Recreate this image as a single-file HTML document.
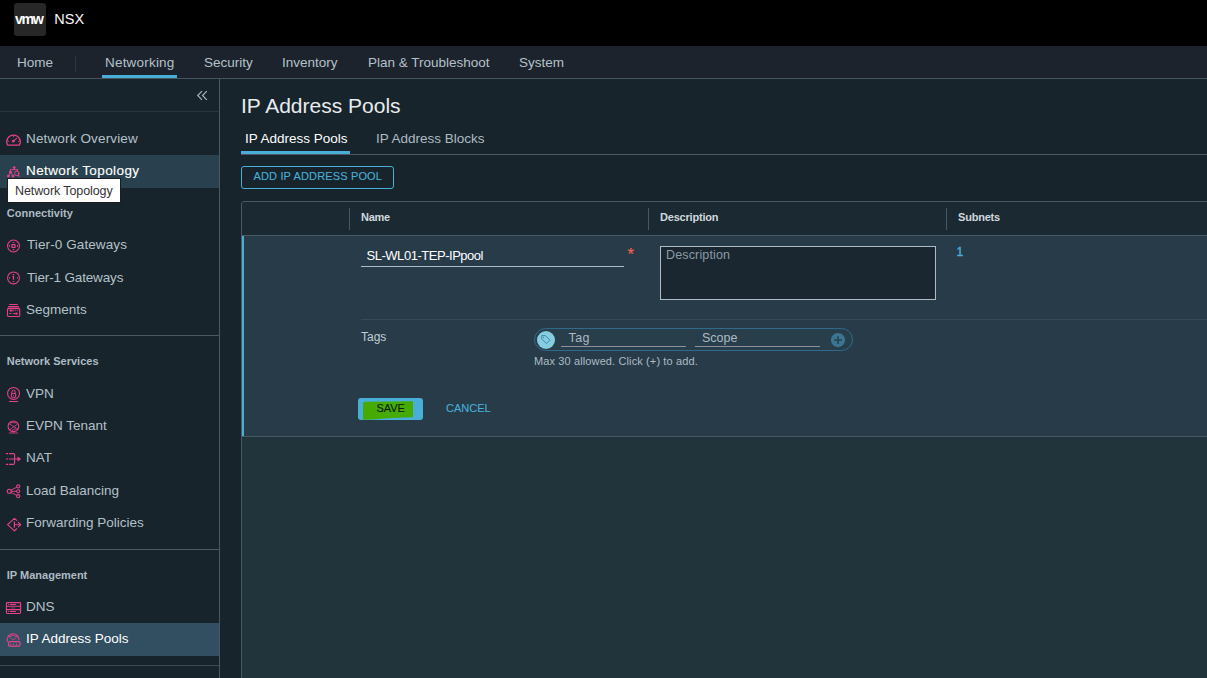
<!DOCTYPE html>
<html><head><meta charset="utf-8">
<style>
*{box-sizing:border-box;margin:0;padding:0}
html,body{width:1207px;height:678px;overflow:hidden;background:#17242b;font-family:"Liberation Sans",sans-serif;color:#adbbc4}
.abs{position:absolute}
#hdr{left:0;top:0;width:1207px;height:46px;background:#000}
#logo{left:14px;top:3px;width:32px;height:33px;background:#272727;border-radius:3px}
#nav{left:0;top:46px;width:1207px;height:33px;background:#1c232d;border-bottom:1px solid #47545f}
.navi{top:55px;font-size:13.5px;color:#b4c1c9;white-space:nowrap}
#side{left:0;top:79px;width:220px;height:599px;background:#17242b;border-right:1px solid #485964}
.sitem{left:26px;font-size:13.5px;color:#b4c1c9;white-space:nowrap}
.shead{left:6.8px;font-size:11px;font-weight:bold;color:#adbbc4;white-space:nowrap}
.sline{left:0;width:219px;height:1px;background:#485964}
.t{white-space:nowrap}
.th{top:211px;font-size:11px;font-weight:bold;color:#d0d8dd;white-space:nowrap}
</style></head><body>
<div class="abs" id="hdr"></div>
<div class="abs" id="logo"></div>
<div class="abs t" id="vmw" style="left:14.8px;top:10px;font-size:15px;font-weight:bold;color:#fff;letter-spacing:-1.5px;transform:scaleX(0.95);transform-origin:0 0">vmw</div>
<div class="abs t" id="nsx" style="left:54.3px;top:11px;font-size:14.5px;color:#fafafa">NSX</div>
<div class="abs" id="nav"></div>
<div class="abs navi" style="left:17px">Home</div>
<div class="abs" style="left:75px;top:56px;width:1px;height:16px;background:#2a3943"></div>
<div class="abs navi" style="left:105px;letter-spacing:0.2px">Networking</div>
<div class="abs" style="left:102px;top:75px;width:75px;height:3px;background:#49afd9"></div>
<div class="abs navi" style="left:204px">Security</div>
<div class="abs navi" style="left:282px">Inventory</div>
<div class="abs navi" style="left:368px">Plan &amp; Troubleshoot</div>
<div class="abs navi" style="left:519px">System</div>

<div class="abs" id="side"></div>
<div class="abs sline" style="top:111px;background:#27353e"></div>
<svg class="abs" style="left:190px;top:85px" width="24" height="22" viewBox="190 85 24 22"><path d="M202,91.2 L197.7,95.5 L202,99.8 M206.8,91.2 L202.5,95.5 L206.8,99.8" fill="none" stroke="#adbbc4" stroke-width="1.1"/></svg>
<div class="abs sitem" style="top:131px;letter-spacing:0.15px">Network Overview</div>
<div class="abs" style="left:0;top:155px;width:219px;height:33px;background:#29414e"></div>
<div class="abs sitem" style="top:163px;color:#fff;letter-spacing:0.4px;-webkit-text-stroke:0.12px #fff">Network Topology</div>
<div class="abs shead" style="top:207px">Connectivity</div>
<div class="abs sitem" style="top:237px;left:27px;letter-spacing:0.1px">Tier-0 Gateways</div>
<div class="abs sitem" style="top:270px;left:27px;letter-spacing:-0.15px">Tier-1 Gateways</div>
<div class="abs sitem" style="top:302px">Segments</div>
<div class="abs sline" style="top:335px"></div>
<div class="abs shead" style="top:355px">Network Services</div>
<div class="abs sitem" style="top:386px">VPN</div>
<div class="abs sitem" style="top:418px">EVPN Tenant</div>
<div class="abs sitem" style="top:450px">NAT</div>
<div class="abs sitem" style="top:483px">Load Balancing</div>
<div class="abs sitem" style="top:515px">Forwarding Policies</div>
<div class="abs sline" style="top:549px"></div>
<div class="abs shead" style="top:569px">IP Management</div>
<div class="abs sitem" style="top:599px">DNS</div>
<div class="abs" style="left:0;top:623px;width:219px;height:33px;background:#324f61"></div>
<div class="abs sitem" style="top:631px;color:#fff">IP Address Pools</div>
<div class="abs sline" style="top:665px;background:#3a4954"></div>

<!-- sidebar icons (page coordinates) -->
<svg class="abs" id="icons" style="left:0;top:120px" width="26" height="558" viewBox="0 120 26 558" fill="none" stroke="#e5418b" stroke-width="1.05" stroke-linecap="round" stroke-linejoin="round">
<!-- overview gauge -->
<path d="M7.5,145.05 H19.5 A6.8,6.8 0 1 0 7.5,145.05 Z" stroke-width="1.2"/>
<path d="M13.4,141.1 L16.6,138.4"/><circle cx="13.3" cy="141.2" r="1.4" fill="#e5418b" stroke="none"/>
<path d="M13.4,135.8 v1 M7.8,141.3 h0.8 M18.6,141.3 h0.8" stroke-width="0.9"/>
<!-- topology -->
<path d="M14.2,168 V169.7 M10.5,169.7 H17.3 M10.5,169.7 V172 M17.3,169.7 V171.2 M10.5,172 L8.4,176 M10.5,172 L13,176" stroke-width="0.9"/>
<circle cx="14.2" cy="167.5" r="1.35" fill="#e5418b" stroke="none"/><circle cx="10.5" cy="172" r="1.5" fill="#e5418b" stroke="none"/>
<circle cx="8.4" cy="176.1" r="1.45" fill="#e5418b" stroke="none"/><circle cx="13" cy="176.1" r="1.45" fill="#e5418b" stroke="none"/>
<circle cx="16.8" cy="173.4" r="2.2" stroke-width="0.95"/><path d="M18.4,175.1 L19.1,176.6" stroke-width="1.1"/>
<!-- tier-0 -->
<circle cx="13.5" cy="246" r="5.95" stroke-width="1.1"/>
<rect x="12" y="244.6" width="3" height="2.9" stroke-width="1.2"/>
<path d="M13.5,242 v1.1 M13.5,249.1 v1.1 M9,246 h1.1 M16.9,246 h1.1" stroke-width="1.4" stroke-linecap="butt"/>
<!-- tier-1 -->
<circle cx="13.5" cy="277.9" r="5.95" stroke-width="1.1"/>
<path d="M12.5,276.7 L13.5,276.2 V279.8" stroke-width="1.25" stroke-linecap="butt"/>
<path d="M13.5,274 v1.1 M13.5,281 v1.1 M9,277.9 h1.1 M16.9,277.9 h1.1" stroke-width="1.4" stroke-linecap="butt"/>
<!-- segments -->
<path d="M9.3,304.5 H17.7" stroke-width="1" stroke-linecap="butt"/><path d="M8.1,306.6 H18.8" stroke-width="1.15" stroke-linecap="butt"/>
<rect x="7.5" y="308.6" width="12.2" height="7.9" rx="0.9" stroke-width="1.1"/>
<path d="M7.6,307.6 H19.6" stroke-width="0.9" stroke-opacity="0.45" stroke-linecap="butt"/>
<path d="M10.6,310.7 H14 M15.2,310.7 h0.9 M17.2,310.7 h0.9 M9.2,313.6 h2.2 M12.8,313.6 H16.6" stroke-width="0.95" stroke-linecap="butt"/>
<path d="M11,309.6 L9.4,310.7 L11,311.8 Z M16.2,312.5 L17.9,313.6 L16.2,314.7 Z" fill="#e5418b" stroke-width="0.4"/>
<!-- vpn -->
<circle cx="13.55" cy="393.4" r="5.95" stroke-width="1.1"/>
<rect x="11.4" y="393.6" width="4.3" height="3.7" rx="0.3" stroke-width="1"/><path d="M11.9,393.6 V392 Q11.9,390.1 13.55,390.1 Q15.2,390.1 15.2,392 V393.6" stroke-width="1"/>
<path d="M13.55,395 v0.9" stroke-width="0.9" stroke-linecap="butt"/>
<path d="M9.4,401.5 H17.6" stroke-width="1.1"/>
<!-- evpn -->
<circle cx="13.4" cy="426.3" r="5.35" stroke-width="1.1"/>
<path d="M10.4,422.9 Q13.4,421.9 16.2,422.9 M9,423.7 L15.7,427.7 M17.2,424.4 L9.6,429.8 M12,430.4 Q14.6,428.4 17.6,428.6" stroke-width="0.85"/>
<path d="M13.4,431.6 V432.6" stroke-width="1.2" stroke-linecap="butt"/>
<path d="M9.3,433 H17.7" stroke-width="1" stroke-opacity="0.85"/>
<!-- nat -->
<path d="M5.9,453.6 H8 M8.9,453.6 H13.4 Q14.6,453.6 14.6,454.8 V463.1 Q14.6,464.3 13.4,464.3 H8.9 M5.9,464.3 H8 M5.9,459 H8 M8.9,459 H18.5" stroke-width="1.15" stroke-linecap="butt"/>
<path d="M18,457.1 L20.8,459 L18,460.9 Z" fill="#e5418b" stroke-width="0.5"/>
<!-- lb -->
<circle cx="9.3" cy="491.25" r="2.05" stroke-width="1.1"/><circle cx="18.2" cy="486.45" r="1.6"/><circle cx="18.2" cy="491.3" r="1.6"/><circle cx="18.2" cy="496.2" r="1.6"/>
<path d="M11.4,491.3 H16.6 M11,490.1 L16.8,487.2 M11,492.4 L16.8,495.4" stroke-width="0.95"/>
<!-- forwarding -->
<path d="M16.7,520.4 L14.4,518.4 L7.6,524.6 L14.4,530.8 L16.7,528.8" stroke-width="1.15"/>
<path d="M14.4,521.4 V527.8" stroke-width="1.2" stroke-linecap="butt"/>
<path d="M14.4,524.6 H20.2" stroke-width="1.1" stroke-opacity="0.8"/>
<path d="M18.3,522.3 L20.8,524.6 L18.3,526.9" stroke-width="1.15"/>
<!-- dns -->
<rect x="6.45" y="602.55" width="14.1" height="10.9" rx="0.9" stroke-width="1.15"/>
<path d="M6.5,606.3 H20.5 M6.5,609.65 H20.5" stroke-width="1.1" stroke-linecap="butt"/>
<path d="M8.1,604.5 h0.9 M10,604.5 H16 M8.1,611.5 h0.9 M10,611.5 H16" stroke-width="1" stroke-linecap="butt"/>
<path d="M10.8,608 H15.2" stroke-width="1.2" stroke-opacity="0.5" stroke-linecap="butt"/>
<!-- ip pools -->
<path d="M7.2,641.6 V639.8 A5.9,5.9 0 0 1 19,639.6" stroke-width="1.15"/>
<path d="M9,636.6 Q13,633.8 17,636.4 M9.6,636.8 L12.9,639.8 Q14.6,639.6 16.4,637" stroke-width="0.85"/>
<rect x="8.5" y="641.6" width="11.5" height="4.5" rx="1" stroke-width="1.15"/>
<path d="M10.4,643.6 v1.8 M13.4,643.6 v1.8 M16.5,643.6 v1.8" stroke-width="0.9" stroke-linecap="butt"/>
</svg>

<div class="abs" style="left:7px;top:178px;width:114px;height:25px;background:#fff;border:1px solid #1c1c1c"></div>
<div class="abs t" style="left:15px;top:184px;font-size:12.5px;color:#333;letter-spacing:-0.1px">Network Topology</div>

<div class="abs t" style="left:241px;top:94px;font-size:21px;color:#e9ecef">IP Address Pools</div>
<div class="abs t" style="left:245px;top:131px;font-size:13.5px;color:#fff">IP Address Pools</div>
<div class="abs" style="left:241px;top:151px;width:109px;height:3px;background:#49afd9"></div>
<div class="abs" style="left:241px;top:154px;width:966px;height:1px;background:#485964"></div>
<div class="abs t" style="left:376px;top:131px;font-size:13.5px;color:#adbbc4">IP Address Blocks</div>
<div class="abs" style="left:241px;top:166px;width:153px;height:23px;border:1px solid #49afd9;border-radius:3px"></div>
<div class="abs t" style="left:253.5px;top:169.5px;font-size:11px;color:#49afd9;letter-spacing:0.15px;-webkit-text-stroke:0.1px #49afd9">ADD IP ADDRESS POOL</div>

<div class="abs" style="left:241px;top:201px;width:970px;height:480px;background:#21333b;border:1px solid #485964;border-radius:3px 0 0 0"></div>
<div class="abs" style="left:242px;top:202px;width:965px;height:33px;background:#1b2a32;border-radius:2px 0 0 0"></div>
<div class="abs" style="left:242px;top:235px;width:965px;height:1px;background:#485964"></div>
<div class="abs" style="left:242px;top:236px;width:965px;height:200px;background:#283b49"></div>
<div class="abs" style="left:242px;top:236px;width:2.3px;height:200px;background:#49afd9"></div>
<div class="abs" style="left:242px;top:436px;width:965px;height:1px;background:#485964"></div>
<div class="abs" style="left:349px;top:208px;width:1px;height:22px;background:#485964"></div>
<div class="abs" style="left:648px;top:208px;width:1px;height:22px;background:#485964"></div>
<div class="abs" style="left:946px;top:208px;width:1px;height:22px;background:#485964"></div>
<div class="abs th" style="left:361px;letter-spacing:-0.3px">Name</div>
<div class="abs th" style="left:660px;letter-spacing:-0.2px">Description</div>
<div class="abs th" style="left:958px;letter-spacing:-0.2px">Subnets</div>

<div class="abs t" style="left:366.5px;top:248px;font-size:13px;color:#fff;letter-spacing:-0.47px">SL-WL01-TEP-IPpool</div>
<div class="abs" style="left:361px;top:266px;width:263px;height:1px;background:#adbbc4"></div>
<div class="abs t" style="left:627.4px;top:244.8px;font-size:16.5px;color:#f25f4c;-webkit-text-stroke:0.2px #f25f4c">*</div>
<div class="abs" style="left:660px;top:246px;width:276px;height:54px;background:#1b2730;border:1px solid #adbbc4"></div>
<div class="abs t" style="left:666px;top:248px;font-size:12.5px;color:#8a9ba6;letter-spacing:0.15px">Description</div>
<div class="abs t" style="left:956.6px;top:245px;font-size:12px;color:#49afd9;-webkit-text-stroke:0.35px #49afd9">1</div>
<div class="abs" style="left:361px;top:319px;width:846px;height:1px;background:#364a58"></div>
<div class="abs t" style="left:361px;top:329.5px;font-size:12px;color:#c1cdd4">Tags</div>
<div class="abs" style="left:534px;top:328px;width:319px;height:23px;border:1px solid #2f6a8c;border-radius:12px;background:#283e4b"></div>
<svg class="abs" style="left:536px;top:330px" width="20" height="20" viewBox="536 330 20 20"><circle cx="546" cy="340" r="9" fill="#87cde0"/><path d="M541.8,335.6 h3.6 l4.6,4.6 l-3.4,3.4 l-4.8,-4.6 z" fill="none" stroke="#3d8ba8" stroke-width="1" stroke-linejoin="round"/><circle cx="543.6" cy="337.3" r="0.6" fill="#3d8ba8"/></svg>
<div class="abs t" style="left:568.6px;top:331px;font-size:12.5px;color:#adbbc4;letter-spacing:0.4px">Tag</div>
<div class="abs" style="left:561px;top:346px;width:125px;height:1px;background:#8b929b"></div>
<div class="abs t" style="left:702px;top:331px;font-size:12.5px;color:#adbbc4">Scope</div>
<div class="abs" style="left:695px;top:346px;width:125px;height:1px;background:#8b929b"></div>
<svg class="abs" style="left:830px;top:332px" width="16" height="16" viewBox="830 332 16 16"><circle cx="838" cy="340.1" r="7.1" fill="#3a7691"/><path d="M834.1,340.1 h7.8 M838,336.2 v7.8" stroke="#284658" stroke-width="1.7"/></svg>
<div class="abs t" style="left:534px;top:355px;font-size:11px;color:#adbbc4;letter-spacing:0.12px">Max 30 allowed. Click (+) to add.</div>
<div class="abs" style="left:358px;top:398px;width:65px;height:22px;background:#49afd9;border-radius:3px"></div>
<svg class="abs" style="left:358px;top:396px" width="66" height="26" viewBox="358 396 66 26"><path d="M363,402.6 Q363.2,401.9 365.5,401.8 L412.4,401.2 Q413,401.2 413,401.8 L413,417.2 Q392,417.6 372,419.5 L363.4,419.8 Q363,419.8 363,419.2 Z" fill="#45ab02"/></svg>
<div class="abs t" style="left:376.5px;top:402px;font-size:11px;color:#0a1a0a;letter-spacing:-0.1px;-webkit-text-stroke:0.1px #0a1a0a">SAVE</div>
<div class="abs t" style="left:446px;top:402px;font-size:11px;color:#49afd9;letter-spacing:0px;-webkit-text-stroke:0.1px #49afd9">CANCEL</div>
</body></html>
